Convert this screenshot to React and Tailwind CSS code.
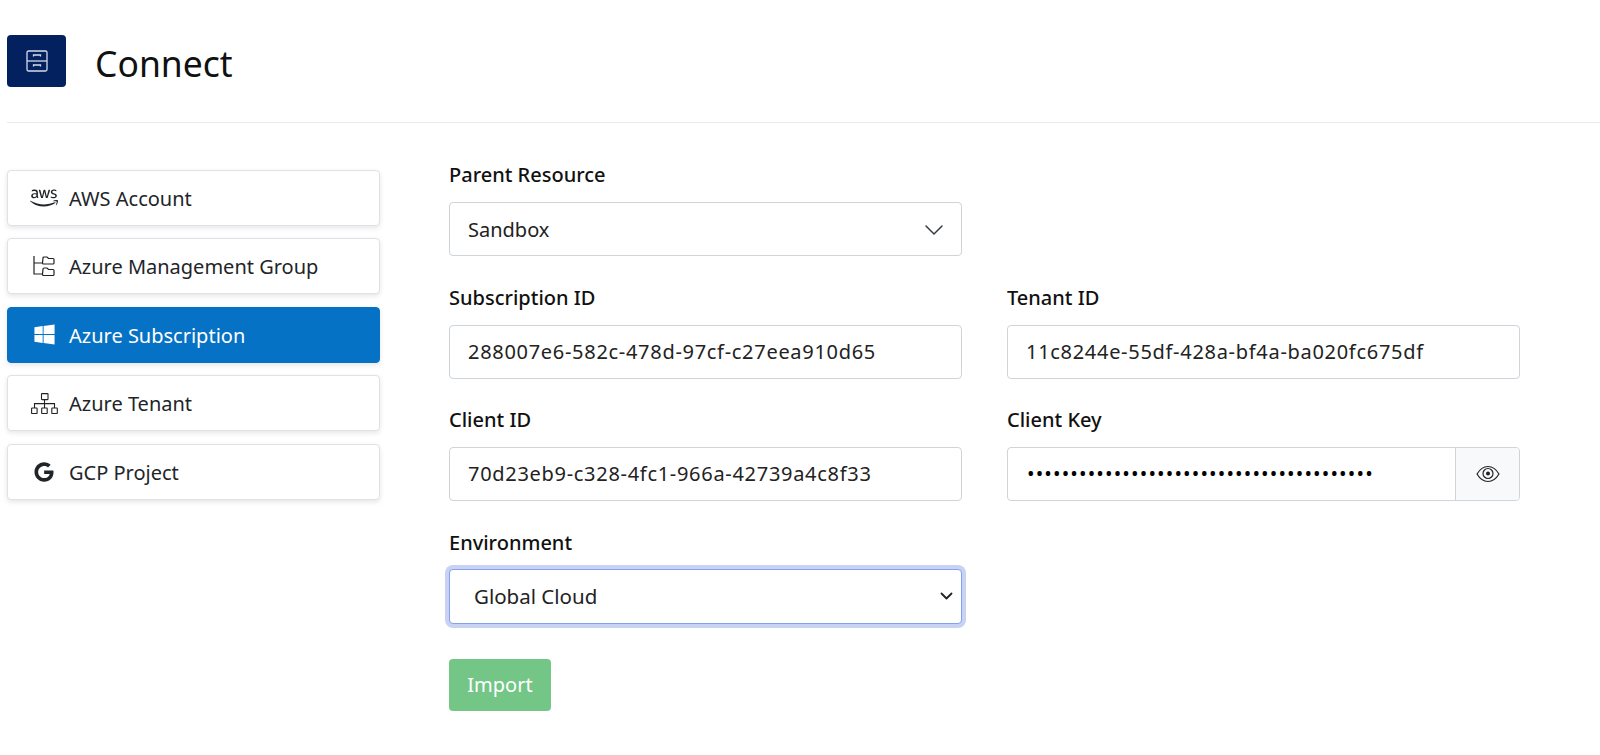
import React from "react";
import { FaAws, FaWindows, FaGoogle } from "react-icons/fa";

const Drawers = () => (
  <svg width="22" height="22" viewBox="0 0 22 22" fill="none" stroke="#d5dbe8" strokeWidth="1.3">
    <rect x="1" y="1" width="20" height="20" rx="1.5" />
    <path d="M1 11h20" />
    <path d="M7.500 6.500v-1.500h7v1.500M7.500 16.500v-1.500h7v1.500" />
  </svg>
);

const Folders = () => (
  <svg width="22" height="21" viewBox="0 0 22 21" fill="none" stroke="#222" strokeWidth="1.2">
    <path d="M1 0v18h8M1 7h8" />
    <path d="M10 2a1 1 0 0 1 1-1h3l1.500 1.500h4.500a1 1 0 0 1 1 1v3.500a1 1 0 0 1-1 1h-9.500a1 1 0 0 1-1-1z" />
    <path d="M10 13a1 1 0 0 1 1-1h3l1.500 1.500h4.500a1 1 0 0 1 1 1v4a1 1 0 0 1-1 1h-9.500a1 1 0 0 1-1-1z" />
  </svg>
);

const Tenant = () => (
  <svg width="27" height="21" viewBox="0 0 27 21" fill="none" stroke="#222" strokeWidth="1.1">
    <rect x="10.500" y="0.600" width="6.500" height="6" rx="0.500" />
    <path d="M13.500 6.600v4M3.500 15v-4.400h20V15M13.500 10.600V15" />
    <rect x="0.600" y="15" width="5.500" height="5.500" rx="0.500" />
    <rect x="10.700" y="15" width="5.500" height="5.500" rx="0.500" />
    <rect x="20.800" y="15" width="5.500" height="5.500" rx="0.500" />
  </svg>
);

const Eye = () => (
  <svg width="24" height="18" viewBox="0 0 24 18" fill="none" stroke="#222" strokeWidth="1.2">
    <path d="M1 9c3-5 7-7.500 11-7.500S20 4 23 9c-3 5-7 7.500-11 7.500S4 14 1 9z" />
    <circle cx="12" cy="8.500" r="5" />
    <circle cx="12" cy="8.500" r="2" fill="#222" stroke="none" />
  </svg>
);

const Chevron = () => (
  <svg className="-mr-[1px]" width="20" height="12" viewBox="0 0 20 12" fill="none" stroke="#343a40" strokeWidth="1.500" strokeLinecap="round">
    <path d="M2 2l8 8 8-8" />
  </svg>
);

const SmallChevron = () => (
  <svg width="13" height="8" viewBox="0 0 13 8" fill="none" stroke="#222" strokeWidth="1.800" strokeLinecap="round" strokeLinejoin="round">
    <path d="M1.500 1.500l5 5 5-5" />
  </svg>
);

const items = [
  { label: "AWS Account", icon: <FaAws size={28} /> },
  { label: "Azure Management Group", icon: <Folders /> },
  { label: "Azure Subscription", icon: <FaWindows size={23} />, active: true },
  { label: "Azure Tenant", icon: <Tenant /> },
  { label: "GCP Project", icon: <FaGoogle size={20} /> },
];

const Field = ({ label, children, className = "" }) => (
  <div className={"flex flex-col " + className}>
    <label className="text-[20px] leading-[26px] font-medium text-[#111] mb-[14px]">{label}</label>
    {children}
  </div>
);

const Box = ({ children, mono }) => (
  <div
    className={
      "h-[54px] w-full rounded-[4px] border border-[#ced4da] bg-white px-[18px] flex items-center text-[20px] text-[#222] " +
      (mono ? "tracking-[0.7px]" : "pt-[1px]")
    }
  >
    {children}
  </div>
);

export default function App() {
  return (
    <div className="h-[755px] overflow-hidden bg-white pl-[7px] text-[#212529] font-['Noto_Sans','Open_Sans',sans-serif]">
      <header className="h-[123px] border-b border-[#e9ecef] pt-[35px] flex items-start">
        <div className="w-[59px] h-[52px] rounded-[4px] bg-[#03205f] flex items-center justify-center">
          <Drawers />
        </div>
        <h1 className="ml-[29px] text-[35.500px] leading-[56px] font-normal text-[#111]">Connect</h1>
      </header>
      <div className="flex mt-[39px]">
        <nav className="w-[373px] mt-[8px] flex flex-col gap-[12.400px] shrink-0">
          {items.map((it) => (
            <div
              key={it.label}
              className={
                "h-[56px] rounded-[4px] flex items-center text-[20px] shadow-[0_2px_5px_rgba(0,0,0,0.1)] border " +
                (it.active ? "bg-[#0672c5] border-[#0672c5] text-white" : "bg-white border-[#dee2e6] text-[#212529]")
              }
            >
              <span className="w-[28px] ml-[22px] flex items-center justify-center">{it.icon}</span>
              <span className="ml-[11px] pt-[2px]">{it.label}</span>
            </div>
          ))}
        </nav>
        <form className="ml-[69px] w-[1071px] grid grid-cols-[513px_513px] gap-x-[45px] gap-y-[28.500px] content-start">
          <Field label="Parent Resource">
            <Box>
              <span className="flex-1">Sandbox</span>
              <Chevron />
            </Box>
          </Field>
          <div />
          <Field label="Subscription ID">
            <Box mono>288007e6-582c-478d-97cf-c27eea910d65</Box>
          </Field>
          <Field label="Tenant ID">
            <Box mono>11c8244e-55df-428a-bf4a-ba020fc675df</Box>
          </Field>
          <Field label="Client ID">
            <Box mono>70d23eb9-c328-4fc1-966a-42739a4c8f33</Box>
          </Field>
          <Field label="Client Key">
            <div className="h-[54px] flex rounded-[4px] border border-[#ced4da] overflow-hidden">
              <div className="flex-1 px-[19px] flex items-center text-[20px] tracking-[1.150px] text-black">
                ••••••••••••••••••••••••••••••••••••••••
              </div>
              <div className="w-[64px] border-l border-[#ced4da] bg-[#f8f9fa] flex items-center justify-center">
                <Eye />
              </div>
            </div>
          </Field>
          <Field label="Environment">
            <div className="h-[55px] -mt-[1px] rounded-[4px] border border-[#86a0f0] shadow-[0_0_0_4px_#c9d2f3] bg-white pl-[24px] pr-[8px] flex items-center text-[20.500px] text-[#222]">
              <span className="flex-1">Global Cloud</span>
              <SmallChevron />
            </div>
          </Field>
          <div />
          <div className="col-span-2 pt-[7px]">
            <button type="button" className="w-[102px] h-[52px] rounded-[4px] bg-[#73c686] text-white text-[20px]">
              Import
            </button>
          </div>
        </form>
      </div>
    </div>
  );
}
